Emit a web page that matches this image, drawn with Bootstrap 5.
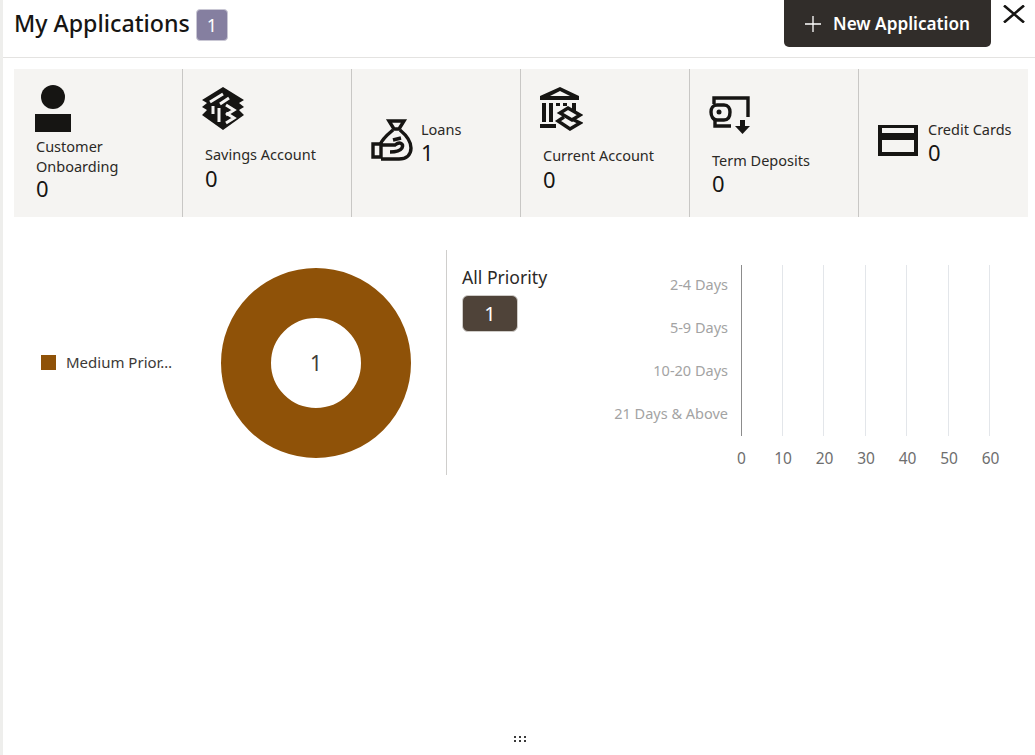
<!DOCTYPE html>
<html lang="en">
<head>
<meta charset="utf-8">
<title>My Applications</title>
<link href="https://cdn.jsdelivr.net/npm/bootstrap@5.3.0/dist/css/bootstrap.min.css" rel="stylesheet">
<style>
html,body{height:100%;overflow:hidden}
body{font-family:"Noto Sans","Open Sans",sans-serif;color:#161513;background:#fff}
.app-shell{height:755px;width:1035px;border-left:3px solid #eeeeec;position:relative}
.app-head{height:58px;border-bottom:1px solid #e4e3e1;padding-left:11px}
.app-title{font-size:23.2px;line-height:32px;font-weight:500;margin:0;padding-top:7px}
.count-chip{width:32px;height:32px;background:#857fa0;border:1px solid #c9c7d4;border-radius:4px;color:#fff;font-size:18px;margin:9px 0 0 6px}
.new-btn{width:207px;height:47px;background:#312d2a;color:#fff;border:0;border-radius:0 0 5px 5px;font-size:17.2px;font-weight:600;margin-left:auto;gap:12px}
.new-btn:hover{background:#312d2a;color:#fff}
.close-x{width:44px;height:24px;padding:3px 0 0 12px;background:none;border:0}
.stat-band{margin:11px 7px 0 11px;height:148px;background:#f5f4f2}
.tile{width:169px;height:148px;border-right:1px solid #c8c7c5;flex:none}
.tile:last-child{border-right:0}
.tile-label{font-size:14.5px;line-height:20px;color:#2b2926}
.tile-num{font-size:22px;line-height:26px;font-weight:450}
.t1{padding:16px 0 0 22px}
.t1 svg{margin-left:-1px}
.t1 .tile-label{margin-top:5px;line-height:19.5px}
.t1 .tile-num{line-height:24px}
.t2{padding:17px 0 0 22px}
.t2 svg{margin-left:-4px}
.t2 .tile-label{margin-top:14px}
.t2 .tile-num{margin-top:1px}
.t3{padding:50px 0 0 19px;gap:8px}
.t4{padding:18px 0 0 22px}
.t4 svg{margin-left:-4px}
.t4 .tile-label{margin-top:14px}
.t4 .tile-num{margin-top:1px}
.t5{padding:27px 0 0 22px}
.t5 svg{margin-left:-3px}
.t5 .tile-label{margin-top:14px}
.t6{padding:50px 0 0 19px;gap:10px}
.t6 svg{margin-top:6px}
.chart-row{padding:33px 0 0 11px}
.donut-pane{width:433px;height:225px;border-right:1px solid #cfcecc;padding-left:27px}
.swatch{width:15px;height:15px;background:#8f5208;flex:none}
.legend-txt{font-size:15px;color:#3c3936;white-space:nowrap}
.legend-box{width:159px;gap:10px}
.donut-svg{margin-left:21px}
.prio-pane{padding:15px 0 0 15px;width:110px}
.prio-title{font-size:17.6px;line-height:24px;color:#2b2926}
.prio-chip{width:56px;height:37px;background:#4f4339;border:1px solid #cfccc8;border-radius:6px;color:#fff;font-size:20px;margin-top:6px}
.bar-svg text{font-family:"Noto Sans","Open Sans",sans-serif}
.drag-dots{position:absolute;left:511px;top:736px}
</style>
</head>
<body>
<div class="app-shell">
  <header class="app-head d-flex align-items-start">
    <h1 class="app-title">My Applications</h1>
    <span class="count-chip d-flex align-items-center justify-content-center">1</span>
    <button class="btn new-btn d-flex align-items-center justify-content-center" type="button">
      <svg width="16" height="16" viewBox="0 0 16 16" aria-hidden="true"><path d="M8 0v16M0 8h16" stroke="#fff" stroke-width="1.3" fill="none"/></svg>
      <span>New Application</span>
    </button>
    <button class="close-x" type="button" aria-label="Close">
      <svg width="22" height="18" viewBox="0 0 22 18" class="d-block" aria-hidden="true"><path d="M1 0.5 21 17.5M21 0.5 1 17.5" stroke="#161513" stroke-width="2.6" fill="none"/></svg>
    </button>
  </header>

  <section class="stat-band d-flex">
    <div class="tile t1">
      <svg width="36" height="47" viewBox="0 0 36 47" class="d-block" aria-hidden="true"><circle cx="18" cy="12" r="12" fill="#161513"/><rect x="0" y="29" width="36" height="18" fill="#161513"/></svg>
      <div class="tile-label">Customer<br>Onboarding</div>
      <div class="tile-num">0</div>
    </div>
    <div class="tile t2">
      <svg width="44" height="44" viewBox="0 0 44 44" class="d-block" aria-hidden="true">
        <path d="M22 1 43 14 38 17 43 21 38 24 43 29 22 44 1 29 6 24 1 21 6 17 1 14Z" fill="#161513"/>
        <g fill="none" stroke="#f5f4f2" stroke-width="3">
          <path d="M22 8 9 16M28 12 19 18"/>
          <path d="M12 20V28M18 22V36"/>
          <path d="M25 19 33 24 25 29M25 27 33 32 25 37"/>
        </g>
      </svg>
      <div class="tile-label">Savings Account</div>
      <div class="tile-num">0</div>
    </div>
    <div class="tile t3 d-flex">
      <svg width="42" height="42" viewBox="0 0 42 42" aria-hidden="true">
        <g fill="none" stroke="#161513" stroke-width="3.4">
          <path d="M18 2H33L28 10H23Z"/>
          <path d="M22 11C16 16 11 20 9 26M29 11C35 16 40 22 40 29 40 36 35 40 28 40H10"/>
          <path d="M2 25H10V38H2Z"/>
          <path d="M10 26H24C29 22 33 25 31 29 29 32 24 33 19 33"/>
          <path d="M22 21 30 19"/>
        </g>
      </svg>
      <div>
        <div class="tile-label">Loans</div>
        <div class="tile-num">1</div>
      </div>
    </div>
    <div class="tile t4">
      <svg width="44" height="44" viewBox="0 0 44 44" class="d-block" aria-hidden="true">
        <g fill="#161513">
          <path d="M21 0 40 9V13H1V9ZM21 4 11 9H31Z" fill-rule="evenodd"/>
          <rect x="3" y="16" width="4" height="19"/><rect x="10" y="16" width="4" height="19"/>
          <rect x="17" y="16" width="4" height="3"/><rect x="24" y="16" width="4" height="3"/><rect x="33" y="16" width="4" height="8"/>
          <rect x="1" y="37" width="16" height="4"/>
        </g>
        <g fill="none" stroke="#161513" stroke-width="3.4">
          <path d="M29 21 41 28 33 33 21 26Z"/>
          <path d="M25 30 19 34 31 42 41 36 33 32"/>
        </g>
      </svg>
      <div class="tile-label">Current Account</div>
      <div class="tile-num">0</div>
    </div>
    <div class="tile t5">
      <svg width="42" height="40" viewBox="0 0 42 40" class="d-block" aria-hidden="true">
        <g fill="none" stroke="#161513" stroke-width="3.4">
          <path d="M5 8V2H39V21"/>
          <path d="M8 9H15C19 9 21 12 21 16 21 21 19 24 15 24H8C4 24 2 20 2 16 2 12 4 9 8 9Z"/>
          <path d="M6 24V30H22"/>
        </g>
        <circle cx="10" cy="16" r="2.5" fill="#161513"/>
        <path d="M26 30 33.500 38 41 30H36V24H31V30Z" fill="#161513"/>
      </svg>
      <div class="tile-label">Term Deposits</div>
      <div class="tile-num">0</div>
    </div>
    <div class="tile t6 d-flex">
      <svg width="40" height="31" viewBox="0 0 40 31" aria-hidden="true">
        <path d="M0 0H40V31H0ZM4 3V8H36V3ZM4 15V27H36V15Z" fill="#161513" fill-rule="evenodd"/>
      </svg>
      <div>
        <div class="tile-label">Credit Cards</div>
        <div class="tile-num">0</div>
      </div>
    </div>
  </section>

  <section class="chart-row d-flex">
    <div class="donut-pane d-flex align-items-center">
      <div class="legend-box d-flex align-items-center">
        <span class="swatch"></span>
        <span class="legend-txt">Medium Prior…</span>
      </div>
      <svg class="donut-svg" width="190" height="190" viewBox="0 0 190 190">
        <circle cx="95" cy="95" r="70" fill="none" stroke="#8f5208" stroke-width="50"/>
        <text x="95" y="103" text-anchor="middle" font-size="21" fill="#3f3c39" font-family="Noto Sans, sans-serif">1</text>
      </svg>
    </div>
    <div class="prio-pane">
      <div class="prio-title">All Priority</div>
      <div class="prio-chip d-flex align-items-center justify-content-center">1</div>
    </div>
    <svg class="bar-svg" width="470" height="225" viewBox="0 0 470 225">
      <g stroke="#e3e6ea" stroke-width="1">
        <path d="M225.5 15V186M266.5 15V186M308.5 15V186M349.5 15V186M391.5 15V186M432.5 15V186"/>
      </g>
      <path d="M184.5 15V186" stroke="#8c8c8c" stroke-width="1"/>
      <g font-size="14.5" fill="#a3a3a3" text-anchor="end">
        <text x="171" y="40">2-4 Days</text>
        <text x="171" y="83">5-9 Days</text>
        <text x="171" y="126">10-20 Days</text>
        <text x="171" y="169">21 Days &amp; Above</text>
      </g>
      <g font-size="15.5" fill="#6e6e6e" text-anchor="middle">
        <text x="184.5" y="214">0</text><text x="226" y="214">10</text><text x="267.5" y="214">20</text><text x="309" y="214">30</text><text x="350.5" y="214">40</text><text x="392" y="214">50</text><text x="433.5" y="214">60</text>
      </g>
    </svg>
  </section>

  <svg class="drag-dots" width="12" height="6" viewBox="0 0 12 6" aria-hidden="true">
    <g fill="#3a3a3a"><rect x="0" y="0" width="2" height="2"/><rect x="5" y="0" width="2" height="2"/><rect x="10" y="0" width="2" height="2"/><rect x="0" y="4" width="2" height="2"/><rect x="5" y="4" width="2" height="2"/><rect x="10" y="4" width="2" height="2"/></g>
  </svg>
</div>
<script src="https://cdn.jsdelivr.net/npm/bootstrap@5.3.0/dist/js/bootstrap.bundle.min.js"></script>
</body>
</html>
